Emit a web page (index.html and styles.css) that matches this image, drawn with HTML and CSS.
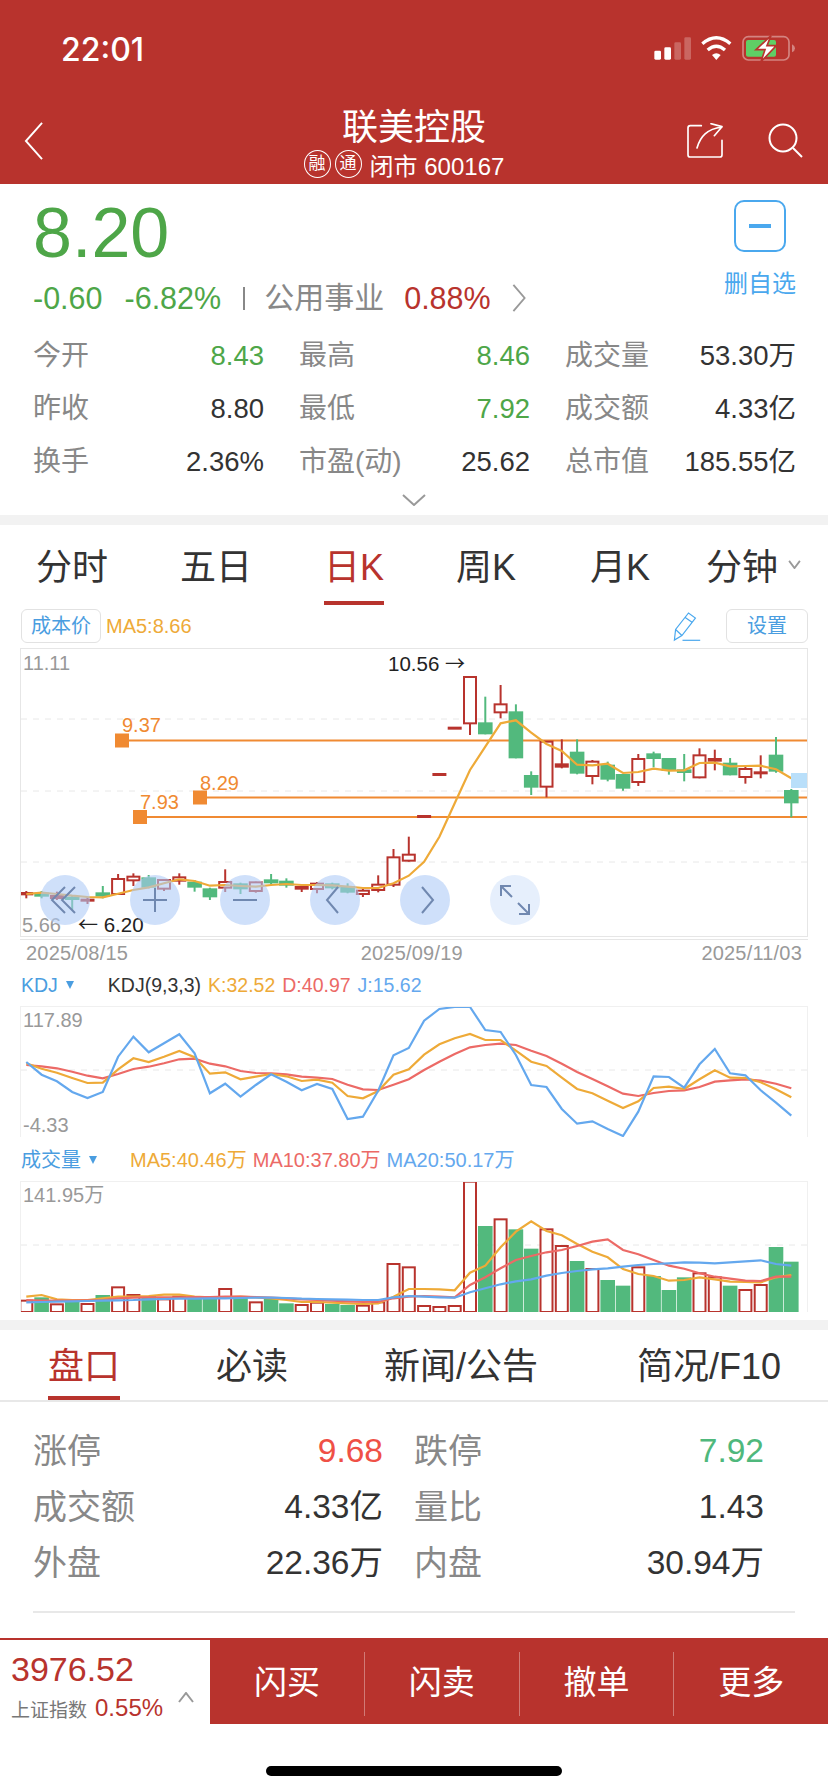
FILE: index.html
```html
<!DOCTYPE html>
<html>
<head>
  <meta charset="utf-8">
  <title>联美控股</title>
  <link rel="stylesheet" href="styles.css">
</head>
<body>

  <header class="top">
    <div class="status">
      <span class="time">22:01</span>
      <svg class="status-icons" viewBox="30 15 462 90">
        <rect x="40" y="65" width="20" height="27" rx="4" fill="#fff"/>
        <rect x="70" y="55" width="20" height="37" rx="4" fill="#fff"/>
        <rect x="100" y="40" width="20" height="52" rx="4" fill="#fff" opacity=".25"/>
        <rect x="130" y="25" width="20" height="67" rx="4" fill="#fff" opacity=".25"/>
        <path d="M184 44Q226 8 268 44M200 63Q226 40 252 63" fill="none" stroke="#fff" stroke-width="10"/>
        <path d="M213 78Q226 68 239 78L226 93Z" fill="#fff"/>
        <rect x="306" y="23" width="138" height="70" rx="16" fill="none" stroke="#fff" stroke-opacity=".4" stroke-width="5"/>
        <rect x="315" y="33" width="90" height="50" rx="6" fill="#5fcf65"/>
        <path d="M453 46Q462 50 462 58Q462 66 453 70Z" fill="#fff" opacity=".4"/>
        <path d="M390 20L345 62H372L360 98L406 50H378Z" fill="#fff" stroke="#b8332d" stroke-width="5"/>
      </svg>
    </div>
    <div class="nav">
      <svg class="nav-back" viewBox="0 0 20 40"><path d="M19 1L2 20L19 39" class="line-white"/></svg>
      <div class="nav-title">
        <div class="name">联美控股</div>
        <div class="sub">
          <span class="badge">融</span>
          <span class="badge">通</span>
          <span class="sub-text">闭市 600167</span>
        </div>
      </div>
      <div class="nav-icons">
        <svg class="icon-share" viewBox="0 0 111 108">
          <path d="M43 8H10A7 7 0 0 0 3 15V95A7 7 0 0 0 10 102H98A7 7 0 0 0 105 95V52" class="line-white line-thick"/>
          <path d="M30 75C40 40 60 18 105 12M72 2L105 11L82 38" class="line-white line-thick"/>
        </svg>
        <svg class="icon-search" viewBox="0 0 36 36">
          <circle cx="15" cy="15" r="13.5" class="line-white"/>
          <path d="M25 25L34 34" class="line-white"/>
        </svg>
      </div>
    </div>
  </header>

  <section class="quote">
    <div class="quote-head">
      <div>
        <div class="price">8.20</div>
        <div class="change">
          <span class="green">-0.60</span>
          <span class="green change-pct">-6.82%</span>
          <span class="change-bar"></span>
          <span class="sector">公用事业</span>
          <span class="red sector-pct">0.88%</span>
          <svg class="sector-arrow" viewBox="0 0 14 30"><path d="M1 1L13 15L1 29" class="line-gray"/></svg>
        </div>
      </div>
      <div class="watch">
        <div class="watch-box"><span class="watch-minus"></span></div>
        <div class="watch-text">删自选</div>
      </div>
    </div>

    <div class="stats">
      <div class="stat"><span>今开</span><b class="green">8.43</b></div>
      <div class="stat"><span>最高</span><b class="green">8.46</b></div>
      <div class="stat"><span>成交量</span><b>53.30万</b></div>
      <div class="stat"><span>昨收</span><b>8.80</b></div>
      <div class="stat"><span>最低</span><b class="green">7.92</b></div>
      <div class="stat"><span>成交额</span><b>4.33亿</b></div>
      <div class="stat"><span>换手</span><b>2.36%</b></div>
      <div class="stat"><span>市盈(动)</span><b>25.62</b></div>
      <div class="stat"><span>总市值</span><b>185.55亿</b></div>
    </div>
    <svg class="more" viewBox="0 0 24 12"><path d="M1 1L12 11L23 1" class="line-gray"/></svg>
  </section>

  <div class="band"></div>

  <nav class="tabs tabs-chart">
    <span class="tab">分时</span>
    <span class="tab">五日</span>
    <span class="tab active">日K</span>
    <span class="tab">周K</span>
    <span class="tab tab-month">月K</span>
    <span class="tab tab-last">分钟<svg class="tab-caret" viewBox="0 0 14 10"><path d="M1 1L7 9L13 1" class="line-gray"/></svg></span>
  </nav>

  <div class="toolbar">
    <span class="tool-btn tool-cost">成本价</span>
    <span class="ma-orange-text tool-ma">MA5:8.66</span>
    <svg class="icon-pen" viewBox="770 55 100 110">
      <path d="M778 155L782 120L825 65L848 82L803 140ZM782 120L803 140M814 80L838 97" class="line-blue"/>
      <path d="M805 156H864" class="line-blue"/>
    </svg>
    <span class="tool-btn tool-set">设置</span>
  </div>

  <div class="chart chart-main">
    <svg class="plot" id="plotMain"></svg>
    <span class="axis axis-top">11.11</span>
    <span class="axis axis-bottom">5.66</span>
    <span class="mark mark-high">10.56 <i class="arrow">→</i></span>
    <span class="mark mark-low"><i class="arrow">←</i> 6.20</span>
    <div class="zoom-row">
      <span class="zoom-btn"><svg viewBox="0 0 50 50"><path d="M35 12L22 25L35 38M25 12L12 25L25 38"/></svg></span>
      <span class="zoom-btn"><svg viewBox="0 0 50 50"><path d="M13 25H37M25 13V37"/></svg></span>
      <span class="zoom-btn"><svg viewBox="0 0 50 50"><path d="M13 25H37"/></svg></span>
      <span class="zoom-btn"><svg viewBox="0 0 50 50"><path d="M28 12L17 25L28 38"/></svg></span>
      <span class="zoom-btn"><svg viewBox="0 0 50 50"><path d="M22 12L33 25L22 38"/></svg></span>
      <span class="zoom-btn zoom-light"><svg viewBox="0 0 50 50"><path d="M11 11L22 22M21 11H11V21M39 39L28 28M29 39H39V29"/></svg></span>
    </div>
  </div>

  <div class="dates">
    <span>2025/08/15</span>
    <span class="date-mid">2025/09/19</span>
    <span>2025/11/03</span>
  </div>

  <div class="legend legend-kdj">
    <span class="blue legend-name">KDJ<i class="legend-caret"></i></span>
    <span class="legend-title">KDJ(9,3,3)</span>
    <span class="ma-orange-text">K:32.52</span>
    <span class="ma-red-text">D:40.97</span>
    <span class="ma-blue-text">J:15.62</span>
  </div>
  <div class="chart chart-sub chart-kdj">
    <svg class="plot" id="plotKdj"></svg>
    <span class="axis axis-sub-top">117.89</span>
    <span class="axis axis-sub-bottom">-4.33</span>
  </div>

  <div class="legend legend-vol">
    <span class="blue legend-name">成交量<i class="legend-caret"></i></span>
    <span class="ma-orange-text legend-ma5">MA5:40.46万</span>
    <span class="ma-red-text">MA10:37.80万</span>
    <span class="ma-blue-text">MA20:50.17万</span>
  </div>
  <div class="chart chart-sub chart-vol">
    <svg class="plot" id="plotVol"></svg>
    <span class="axis axis-sub-top">141.95万</span>
  </div>

  <div class="band band-lined"></div>

  <nav class="tabs tabs-info">
    <span class="tab active">盘口</span>
    <span class="tab">必读</span>
    <span class="tab">新闻/公告</span>
    <span class="tab">简况/F10</span>
  </nav>

  <div class="board">
    <div class="board-item"><span>涨停</span><b class="limit-up">9.68</b></div>
    <div class="board-item"><span>跌停</span><b class="limit-down">7.92</b></div>
    <div class="board-item"><span>成交额</span><b>4.33亿</b></div>
    <div class="board-item"><span>量比</span><b>1.43</b></div>
    <div class="board-item"><span>外盘</span><b>22.36万</b></div>
    <div class="board-item"><span>内盘</span><b>30.94万</b></div>
  </div>
  <div class="board-line"></div>

  <footer class="foot">
    <div class="index">
      <div class="index-value">3976.52</div>
      <div class="index-row">
        <span class="index-name">上证指数</span>
        <span class="red index-pct">0.55%</span>
        <svg class="index-caret" viewBox="0 0 16 11"><path d="M1 10L8 1L15 10" class="line-gray"/></svg>
      </div>
    </div>
    <div class="actions">
      <span class="action">闪买</span>
      <span class="action">闪卖</span>
      <span class="action">撤单</span>
      <span class="action">更多</span>
    </div>
  </footer>

  <div class="home-bar"></div>

  <script src="chart.js"></script>
</body>
</html>
```

FILE: styles.css
```css
* {
  box-sizing: border-box;
}
body {
  margin: 0;
  width: 828px;
  height: 1792px;
  overflow: hidden;
  background: #fff;
  color: #333;
  font-family: "Liberation Sans", "Noto Sans CJK SC", sans-serif;
}
b {
  font-weight: normal;
}
i {
  font-style: normal;
}
.green { color: #4ea648; }
.red { color: #b8332d; }
.blue { color: #4a9de0; }
.ma-orange-text { color: #eeaa38; }
.ma-red-text { color: #ec6a66; }
.ma-blue-text { color: #64a8ee; }

.line-white, .line-gray, .line-blue {
  fill: none;
  stroke-width: 2;
}
.line-white { stroke: #fff; }
.line-thick { stroke-width: 5; stroke-linecap: round; stroke-linejoin: round; }
.line-gray { stroke: #999; }
.line-blue { stroke: #4aa8ee; stroke-width: 4; }

/* header */
.top {
  height: 184px;
  background: #b8332d;
  color: #fff;
}
.status {
  height: 98px;
  padding: 0 23px 0 61px;
  display: flex;
  align-items: center;
  justify-content: space-between;
}
.time {
  font-family: Inter, "Liberation Sans", sans-serif;
  font-size: 32px;
  font-weight: 500;
}
.status-icons {
  width: 154px;
  height: 30px;
}
.nav {
  height: 86px;
  padding: 0 24px;
  display: grid;
  grid-template-columns: 1fr auto 1fr;
  align-items: center;
}
.nav-back {
  width: 19px;
  height: 38px;
}
.nav-title {
  text-align: center;
}
.name {
  font-size: 36px;
  line-height: 44px;
  padding-top: 2px;
}
.sub {
  height: 28px;
  padding-right: 20px;
  display: flex;
  align-items: center;
  justify-content: center;
  gap: 4px;
  font-size: 24px;
}
.badge {
  width: 27px;
  height: 28px;
  border: 1px solid #fff;
  border-radius: 50%;
  font-size: 17px;
  line-height: 26px;
  text-align: center;
}
.sub-text {
  margin-left: 4px;
}
.nav-icons {
  display: flex;
  justify-content: flex-end;
  align-items: center;
  gap: 44px;
}
.icon-share {
  width: 37px;
  height: 36px;
}
.icon-search {
  width: 36px;
  height: 36px;
}

/* quote */
.quote {
  height: 331px;
  padding-top: 9px;
}
.quote-head {
  height: 125px;
  padding: 0 32px 0 33px;
  display: flex;
  justify-content: space-between;
}
.price {
  height: 80px;
  font-size: 70px;
  line-height: 80px;
  color: #4ea648;
}
.change {
  height: 40px;
  margin-top: 5px;
  display: flex;
  align-items: center;
  font-size: 30.5px;
  line-height: 40px;
}
.change-pct {
  margin-left: 22px;
}
.change-bar {
  width: 2px;
  height: 23px;
  margin: 0 19px 0 22px;
  background: #888;
}
.sector {
  color: #888;
  font-size: 30px;
}
.sector-pct {
  margin-left: 20px;
}
.sector-arrow {
  width: 14px;
  height: 28px;
  margin-left: 21px;
}
.watch {
  width: 72px;
  padding-top: 7px;
}
.watch-box {
  width: 52px;
  height: 52px;
  margin: 0 auto;
  border: 2px solid #4aa8ee;
  border-radius: 10px;
  display: flex;
  align-items: center;
  justify-content: center;
}
.watch-minus {
  width: 22px;
  height: 4px;
  background: #4aa8ee;
}
.watch-text {
  margin-top: 17px;
  font-size: 24px;
  line-height: 30px;
  color: #4aa8ee;
}
.stats {
  margin: 11px 0 0 33px;
  display: grid;
  grid-template-columns: repeat(3, 231px);
  column-gap: 35px;
  grid-auto-rows: 53px;
}
.stat, .board-item {
  display: flex;
  align-items: center;
  justify-content: space-between;
}
.stat {
  font-size: 28px;
  line-height: 40px;
}
.stat b {
  font-size: 27.5px;
}
.stat span, .board-item span {
  color: #888;
}
.more {
  display: block;
  width: 24px;
  height: 12px;
  margin: 6px auto 0;
}
.band {
  height: 10px;
  background: #f2f2f2;
}
.band-lined {
  height: 10px;
  margin-top: 8px;
}

/* tabs */
.tabs {
  display: flex;
  font-size: 36px;
}
.tab {
  position: relative;
  display: flex;
  align-items: center;
}
.tab.active {
  color: #b8332d;
}
.tab.active::after {
  content: "";
  position: absolute;
  left: 0;
  right: 0;
  bottom: -2px;
  height: 4px;
  background: #b8332d;
}
.tabs-chart {
  height: 80px;
  padding: 0 0 2px 36px;
  gap: 72px;
}
.tab-month {
  margin-left: 2px;
}
.tab-last {
  margin-left: -16px;
}
.tab-caret {
  width: 13px;
  height: 9px;
  margin-left: 10px;
}
.tabs-info {
  height: 72px;
  padding: 0 0 4px 48px;
  gap: 96px;
  border-bottom: 2px solid #e8e8e8;
}
.tabs-info .tab.active::after {
  bottom: -4px;
}
.tabs-info .tab:last-child {
  margin-left: 3px;
}

/* chart toolbar */
.toolbar {
  height: 34px;
  margin-top: 4px;
  padding: 0 20px 0 21px;
  display: flex;
  align-items: center;
  font-size: 20px;
}
.tool-btn {
  height: 34px;
  border: 1px solid #e2e2e2;
  border-radius: 6px;
  color: #4a9de0;
  line-height: 32px;
  text-align: center;
}
.tool-cost {
  width: 80px;
}
.tool-ma {
  margin-left: 5px;
}
.icon-pen {
  width: 30px;
  height: 33px;
  margin-left: auto;
}
.tool-set {
  width: 82px;
  margin-left: 24px;
}

/* charts */
.chart {
  position: relative;
  width: 788px;
  margin: 5px 0 0 20px;
  border: 1px solid #e6e6e6;
}
.chart-main {
  height: 289px;
}
.chart-sub {
  height: 131px;
  margin-top: 8px;
  border-color: #f0f0f0;
  border-bottom: none;
}
.plot {
  display: block;
  width: 100%;
  height: 100%;
}
.plot text {
  fill: #f08a32;
  font-size: 20px;
}
.grid-line {
  stroke: #e8e8e8;
  stroke-dasharray: 6 6;
}
.cost-line {
  stroke: #f08a32;
  stroke-width: 2;
}
.cost-mark {
  fill: #f08a32;
}
.up {
  stroke: #b8332d;
  stroke-width: 2;
  fill: #fff;
}
.up-solid {
  fill: #b8332d;
  stroke: #b8332d;
  stroke-width: 2;
}
.down {
  fill: #52b97d;
  stroke: none;
}
.wick-down {
  stroke: #52b97d;
  stroke-width: 2;
}
.now-box {
  fill: #b9dffa;
}
.ma-orange, .ma-red, .ma-blue {
  fill: none;
  stroke-width: 2.2;
}
.ma-orange { stroke: #eeaa38; }
.ma-red { stroke: #ec6a66; }
.ma-blue { stroke: #64a8ee; }
.axis, .mark {
  position: absolute;
  font-size: 20px;
  line-height: 22px;
  color: #999;
}
.axis-top { left: 2px; top: 3px; }
.axis-bottom { left: 1px; top: 265px; }
.axis-sub-top { left: 2px; top: 2px; }
.axis-sub-bottom { left: 2px; top: 107px; }
.mark {
  font-size: 20.5px;
  color: #222;
}
.arrow {
  font-family: "Noto Sans CJK SC", sans-serif;
  font-size: 20px;
}
.mark-high { left: 367px; top: 3px; }
.mark-low { left: 57px; top: 264px; }
.zoom-row {
  position: absolute;
  left: 19px;
  top: 226px;
  display: flex;
  gap: 40px;
}
.zoom-btn {
  width: 50px;
  height: 50px;
  border-radius: 50%;
  background: rgba(172, 202, 246, 0.58);
}
.zoom-light {
  background: rgba(172, 202, 246, 0.3);
}
.zoom-btn svg {
  display: block;
  width: 50px;
  height: 50px;
  fill: none;
  stroke: #7088b0;
  stroke-width: 2;
}
.dates {
  width: 788px;
  height: 27px;
  margin: 2px 0 0 20px;
  padding: 0 6px;
  border-top: 1px solid #e6e6e6;
  display: flex;
  align-items: center;
  justify-content: space-between;
  font-size: 20px;
  letter-spacing: 0.2px;
  color: #999;
}
.date-mid {
  margin-right: 6px;
}
.legend {
  height: 26px;
  margin-top: 6px;
  padding-left: 21px;
  display: flex;
  align-items: center;
  font-size: 20px;
  line-height: 26px;
}
.legend-kdj {
  gap: 7px;
  font-size: 19.5px;
}
.legend-vol {
  gap: 6px;
  margin-top: 10px;
}
.legend-name {
  display: flex;
  align-items: center;
}
.legend-caret {
  width: 0;
  height: 0;
  margin-left: 8px;
  border-left: 4px solid transparent;
  border-right: 4px solid transparent;
  border-top: 8px solid #4a9de0;
}
.legend-title {
  margin-left: 27px;
  color: #333;
}
.legend-ma5 {
  margin-left: 27px;
}

/* board */
.board {
  margin: 21px 0 0 33px;
  display: grid;
  grid-template-columns: repeat(2, 350px);
  column-gap: 31px;
  grid-auto-rows: 56px;
}
.board-item {
  font-size: 34px;
  line-height: 44px;
}
.board-item b {
  font-size: 33.5px;
}
.limit-up { color: #ef5046; }
.limit-down { color: #4fb87c; }
.board-line {
  height: 2px;
  margin: 20px 33px 0;
  background: #e8e8e8;
}

/* footer */
.foot {
  height: 86px;
  margin-top: 25px;
  display: flex;
  border-top: 2px solid #b8332d;
}
.index {
  width: 210px;
  padding: 10px 0 0 11px;
}
.index-value {
  font-size: 34px;
  line-height: 38px;
  color: #b8332d;
}
.index-row {
  height: 28px;
  margin-top: 6px;
  display: flex;
  align-items: center;
}
.index-name {
  font-size: 19px;
  color: #777;
}
.index-pct {
  margin-left: 8px;
  font-size: 24px;
}
.index-caret {
  width: 16px;
  height: 11px;
  margin: -22px 0 0 15px;
}
.actions {
  flex: 1;
  margin-top: -2px;
  padding-top: 14px;
  height: 86px;
  display: flex;
  align-items: flex-start;
  background: #b8332d;
}
.action {
  flex: 1;
  height: 64px;
  padding-bottom: 8px;
  display: flex;
  align-items: center;
  justify-content: center;
  color: #fff;
  font-size: 33px;
  border-left: 1px solid rgba(255, 255, 255, 0.35);
}
.action:first-child {
  border-left: none;
}
.home-bar {
  width: 296px;
  height: 10px;
  margin: 42px 0 0 266px;
  border-radius: 5px;
  background: #000;
}
```

FILE: chart.js
```js
// y values are read off the reference at 3x, so toY() scales them back down
const STEP = 15.3;
const toX = i => 5.3 + STEP * i;

// type, body top, body bottom, wick top, wick bottom
// r = hollow red, R = solid red, g = green
const candles = [
  ["R",909,913,903,925],["g",908,920,903,925],["R",918,924,905,930],["g",920,930,915,960],
  ["R",929,932,920,942],["g",907,920,888,925],["r",867,912,852,915],["r",860,871,850,888],
  ["g",862,893,855,895],["r",870,896,868,903],["r",862,872,850,884],["g",875,893,870,905],
  ["g",895,922,893,930],["r",876,893,838,906],["g",880,898,878,912],["r",877,903,875,908],
  ["g",868,880,852,886],["g",872,887,865,893],["R",891,896,883,906],["r",881,897,876,910],
  ["g",880,895,878,898],["g",888,908,880,910],["r",902,912,897,921],["r",884,900,856,907],
  ["r",802,884,777,891],["r",794,812,740,815],["R",678,681,678,681],["R",552,555,552,555],
  ["R",413,416,413,416],["r",261,400,261,435],["g",397,433,320,433],["r",343,367,285,385],
  ["g",364,505,343,505],["g",555,593,544,615],["r",455,590,455,622],["R",523,530,448,535],
  ["g",485,551,448,553],["r",515,558,510,583],["g",524,569,515,574],["g",552,596,552,602],
  ["r",507,576,492,588],["g",490,507,485,532],["g",504,543,504,554],["g",538,549,492,574],
  ["r",496,562,475,565],["R",507,512,479,541],["g",518,556,504,556],["r",537,561,530,581],
  ["R",547,550,496,565],["g",494,545,441,548],["g",600,640,597,682]
];

const ma5Main = [912,908,912,917,921,922,911,900,892,880,868,873,887,885,888,890,885,882,885,885,886,890,894,894,880,857,
  815,740,640,540,470,400,391,428,462,483,524,526,521,549,546,536,542,541,519,518,529,528,527,538,565];

const kdjJ = [306,344,364,396,414,396,290,230,277,250,223,280,400,371,410,375,343,365,391,372,387,477,470,392,286,264,
  182,147,141,141,210,216,285,375,381,447,491,484,507,528,455,349,351,383,313,267,340,346,391,428,467];
const kdjK = [310,326,338,354,369,368,328,295,306,290,273,292,341,337,358,350,342,349,363,359,368,408,415,393,344,328,
  284,253,235,222,240,240,272,305,318,353,387,400,422,444,424,384,380,387,358,331,353,354,367,388,412];
const kdjD = [315,319,325,335,347,355,342,327,320,310,298,296,311,319,333,339,340,343,350,353,357,374,388,390,374,358,
  330,305,282,262,255,251,255,272,288,311,336,357,379,401,408,399,393,391,381,365,361,358,362,371,385];

// type, bar top
const volumes = [
  ["r",1022],["g",1012],["r",1033],["g",1018],["r",1032],["g",1005],["r",982],["r",1005],["g",1008],
  ["r",1018],["r",1010],["g",1008],["g",1015],["r",987],["g",1012],["r",1027],["g",1012],["g",1030],
  ["r",1035],["r",1028],["g",1032],["g",1035],["r",1037],["r",1027],["r",912],["r",922],["r",1038],
  ["r",1041],["r",1038],["r",665],["g",798],["r",778],["g",808],["g",866],["r",808],["r",858],["g",903],
  ["r",927],["g",960],["g",977],["r",922],["g",948],["g",990],["g",952],["r",940],["r",952],["g",977],
  ["r",990],["r",975],["g",861],["g",905]
];
const volMa5 = [1010,1005,1018,1020,1020,1015,1010,1010,1008,1004,1004,1010,1012,1012,1010,1012,1015,1020,1026,1026,1028,1030,1032,1030,1010,987,
  987,988,991,938,917,862,815,784,813,826,852,875,892,927,942,948,962,960,952,958,965,966,967,952,945];
const volMa10 = [1020,1022,1022,1022,1021,1020,1015,1013,1012,1012,1012,1011,1011,1010,1010,1011,1013,1015,1018,1020,1022,1024,1026,1025,1015,1010,
  1008,1010,1012,975,952,925,900,888,877,870,858,845,838,870,883,900,917,926,940,950,956,962,963,950,950];
const volMa20 = [1027,1026,1025,1024,1023,1022,1021,1020,1018,1017,1016,1016,1015,1015,1014,1013,1013,1014,1016,1017,1018,1019,1020,1020,1012,1008,
  1010,1012,1013,997,985,973,964,958,947,939,933,928,925,920,915,912,910,907,908,910,907,904,901,912,917];

function polyline(values, toY, cls) {
  const pts = values.map((v, i) => toX(i).toFixed(1) + "," + toY(v).toFixed(1)).join(" ");
  return `<polyline class="${cls}" points="${pts}"/>`;
}

function dashed(y) {
  return `<line class="grid-line" x1="0" x2="786" y1="${y}" y2="${y}"/>`;
}

function costLine(x, y, label, labelX, labelY) {
  return `<line class="cost-line" x1="${x}" x2="786" y1="${y}" y2="${y}"/>
    <rect class="cost-mark" x="${x - 7}" y="${y - 7}" width="14" height="14"/>
    <text x="${labelX}" y="${labelY}">${label}</text>`;
}

// green parts have no stroke, so they get the full 14.6 wide body
function bar(type, x, y, h) {
  const w = type === "g" ? 14.6 : 12;
  const cls = type === "g" ? "down" : type === "R" ? "up-solid" : "up";
  return `<rect class="${cls}" x="${x - w / 2}" y="${y}" width="${w}" height="${h}"/>`;
}

function drawCandle(c, i, toY) {
  const [type, top, bot, wTop, wBot] = c;
  const x = toX(i);
  const wick = `<line class="${type === "g" ? "wick-down" : "up"}" x1="${x}" x2="${x}" y1="${toY(wTop)}" y2="${toY(wBot)}"/>`;
  return wick + bar(type, x, toY(top), (bot - top) / 3);
}

function drawMain() {
  const toY = z => z / 3 - 59;
  let svg = dashed(70) + dashed(142) + dashed(213);
  svg += costLine(101, 91.5, "9.37", 101, 83);
  svg += costLine(179, 148.5, "8.29", 179, 141);
  svg += costLine(119, 168, "7.93", 119, 160);
  candles.forEach((c, i) => { svg += drawCandle(c, i, toY); });
  svg += polyline(ma5Main, toY, "ma-orange");
  svg += `<rect class="now-box" x="770" y="124" width="16" height="15"/>`;
  document.getElementById("plotMain").innerHTML = svg;
}

function drawKdj() {
  const toY = z => z / 3 - 47;
  let svg = dashed(63);
  svg += polyline(kdjD, toY, "ma-red");
  svg += polyline(kdjK, toY, "ma-orange");
  svg += polyline(kdjJ, toY, "ma-blue");
  document.getElementById("plotKdj").innerHTML = svg;
}

function drawVol() {
  const toY = z => z / 3 - 222;
  const floor = 130;
  let svg = dashed(63);
  volumes.forEach((v, i) => {
    const top = toY(v[1]);
    svg += bar(v[0], toX(i), top, floor - top);
  });
  svg += polyline(volMa5, toY, "ma-orange");
  svg += polyline(volMa10, toY, "ma-red");
  svg += polyline(volMa20, toY, "ma-blue");
  document.getElementById("plotVol").innerHTML = svg;
}

drawMain();
drawKdj();
drawVol();
```
